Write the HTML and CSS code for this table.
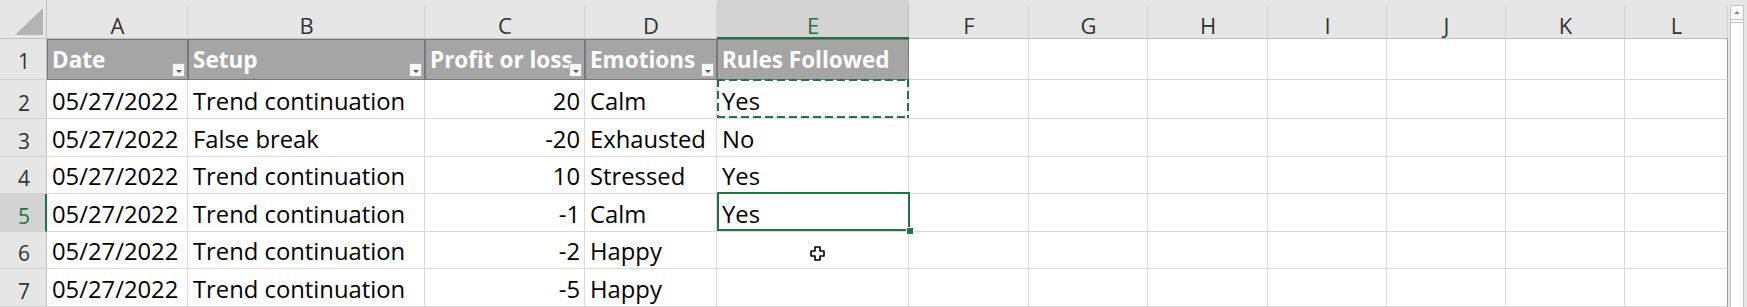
FILE: index.html
```html
<!DOCTYPE html>
<html>
<head>
<meta charset="utf-8">
<title>Trading journal</title>
<link rel="stylesheet" href="styles.css">
</head>
<body>
<div class="window">
  <div class="sheet">
    <div class="corner"><div class="tri"></div></div>
    <div class="ch">A</div>
    <div class="ch">B</div>
    <div class="ch">C</div>
    <div class="ch">D</div>
    <div class="ch sel">E</div>
    <div class="ch">F</div>
    <div class="ch">G</div>
    <div class="ch">H</div>
    <div class="ch">I</div>
    <div class="ch">J</div>
    <div class="ch">K</div>
    <div class="ch">L</div>

    <div class="rh r1">1</div>
    <div class="c th">Date<span class="dd"></span></div>
    <div class="c th">Setup<span class="dd"></span></div>
    <div class="c th">Profit or loss<span class="dd"></span></div>
    <div class="c th">Emotions<span class="dd"></span></div>
    <div class="c th">Rules Followed</div>
    <div class="c"></div><div class="c"></div><div class="c"></div><div class="c"></div><div class="c"></div><div class="c"></div><div class="c last"></div>

    <div class="rh">2</div>
    <div class="c">05/27/2022</div>
    <div class="c">Trend continuation</div>
    <div class="c num">20</div>
    <div class="c">Calm</div>
    <div class="c copy">Yes</div>
    <div class="c"></div><div class="c"></div><div class="c"></div><div class="c"></div><div class="c"></div><div class="c"></div><div class="c last"></div>

    <div class="rh">3</div>
    <div class="c">05/27/2022</div>
    <div class="c">False break</div>
    <div class="c num">-20</div>
    <div class="c">Exhausted</div>
    <div class="c">No</div>
    <div class="c"></div><div class="c"></div><div class="c"></div><div class="c"></div><div class="c"></div><div class="c"></div><div class="c last"></div>

    <div class="rh">4</div>
    <div class="c">05/27/2022</div>
    <div class="c">Trend continuation</div>
    <div class="c num">10</div>
    <div class="c">Stressed</div>
    <div class="c">Yes</div>
    <div class="c"></div><div class="c"></div><div class="c"></div><div class="c"></div><div class="c"></div><div class="c"></div><div class="c last"></div>

    <div class="rh sel">5</div>
    <div class="c">05/27/2022</div>
    <div class="c">Trend continuation</div>
    <div class="c num">-1</div>
    <div class="c">Calm</div>
    <div class="c active">Yes<span class="handle"></span></div>
    <div class="c"></div><div class="c"></div><div class="c"></div><div class="c"></div><div class="c"></div><div class="c"></div><div class="c last"></div>

    <div class="rh">6</div>
    <div class="c">05/27/2022</div>
    <div class="c">Trend continuation</div>
    <div class="c num">-2</div>
    <div class="c">Happy</div>
    <div class="c"><svg class="cursor" width="15" height="15" viewBox="0 0 15 15"><polygon points="5,1 10,1 10,5 14,5 14,10 10,10 10,14 5,14 5,10 1,10 1,5 5,5" fill="#fff" stroke="#000" stroke-width="1.6" stroke-linejoin="round"/></svg></div>
    <div class="c"></div><div class="c"></div><div class="c"></div><div class="c"></div><div class="c"></div><div class="c"></div><div class="c last"></div>

    <div class="rh">7</div>
    <div class="c">05/27/2022</div>
    <div class="c">Trend continuation</div>
    <div class="c num">-5</div>
    <div class="c">Happy</div>
    <div class="c"></div>
    <div class="c"></div><div class="c"></div><div class="c"></div><div class="c"></div><div class="c"></div><div class="c"></div><div class="c last"></div>
  </div>
  <div class="vscroll">
    <div class="track">
      <div class="up"></div>
      <div class="thumb"></div>
    </div>
  </div>
</div>
</body>
</html>
```

FILE: styles.css
```css
html, body {
  margin: 0;
  padding: 0;
  background: #ffffff;
  overflow: hidden;
}

.window {
  display: flex;
  width: 1747px;
  height: 307px;
  overflow: hidden;
}

.sheet {
  display: grid;
  grid-template-columns: 47px 141px 237px 160px 132px 192px 120px 119px 120px 119px 119px 119px 103px;
  grid-template-rows: 39px 41px 39px 38px 37px 38px 37px 38px;
  width: 1728px;
  flex: none;
  font-family: "Open Sans", "Noto Sans", sans-serif;
  color: #000;
}

.corner {
  box-sizing: border-box;
  background: #e6e6e6;
  border-right: 1px solid #bfbfbf;
  border-bottom: 1px solid #bfbfbf;
  display: flex;
  justify-content: flex-end;
  align-items: flex-end;
  padding: 0 3px 3px 0;
}

.tri {
  width: 28px;
  height: 27px;
  background: #b4b4b4;
  clip-path: polygon(100% 0, 100% 100%, 0 100%);
}

.ch {
  box-sizing: border-box;
  background: linear-gradient(#d2d2d2, #d2d2d2) right bottom / 1px calc(100% - 5px) no-repeat, #e6e6e6;
  border-bottom: 1px solid #bfbfbf;
  display: flex;
  justify-content: center;
  align-items: flex-end;
  padding-bottom: 1px;
  font-size: 22px;
  line-height: 24px;
  color: #333;
}

.ch.sel {
  background: linear-gradient(#bcbcbc, #bcbcbc) right bottom / 1px calc(100% - 5px) no-repeat, #d3d3d3;
  border-bottom: 2px solid #217346;
  padding-bottom: 0;
  color: #217346;
}

.rh {
  box-sizing: border-box;
  background: #e6e6e6;
  border-right: 1px solid #bfbfbf;
  border-bottom: 1px solid #d2d2d2;
  display: flex;
  justify-content: center;
  align-items: flex-end;
  padding-bottom: 3px;
  padding-left: 2px;
  font-size: 21px;
  line-height: 24px;
  color: #333;
}

.rh.r1 {
  padding-bottom: 6px;
}

.rh.sel {
  background: #d3d3d3;
  border-right: 2px solid #217346;
  color: #217346;
  padding-left: 3px;
}

.c {
  box-sizing: border-box;
  position: relative;
  border-right: 1px solid #dadada;
  border-bottom: 1px solid #dadada;
  display: flex;
  align-items: flex-end;
  padding: 0 4px 5px 5px;
  font-size: 23.8px;
  line-height: 24px;
  white-space: nowrap;
  overflow: hidden;
}

.c.num {
  justify-content: flex-end;
}

.c.last {
  border-right-color: #9c9c9c;
}

.c.th {
  background: #a5a5a5;
  color: #ffffff;
  font-weight: 700;
  font-size: 22.5px;
  padding-bottom: 7px;
  border-right: 1px solid #787878;
  border-bottom: 1px solid #787878;
  box-shadow: inset 0 1px 0 #787878, inset 1px 0 0 #787878;
}

.dd {
  position: absolute;
  right: 2px;
  bottom: 2px;
  width: 13px;
  height: 14px;
  box-sizing: border-box;
  background: #f7f7f7;
  border: 1px solid #b0b0b0;
}

.dd::after {
  content: "";
  position: absolute;
  left: 3px;
  bottom: 3px;
  border-left: 3px solid transparent;
  border-right: 3px solid transparent;
  border-top: 3px solid #555;
}

.c.copy {
  overflow: visible;
  z-index: 2;
}

.c.copy::before {
  content: "";
  position: absolute;
  left: 0;
  top: -1px;
  right: -1px;
  bottom: 0;
  background:
    repeating-linear-gradient(90deg, #217346 0 8px, transparent 8px 12px) left top / 100% 2px no-repeat,
    repeating-linear-gradient(90deg, #217346 0 8px, transparent 8px 12px) left bottom / 100% 2px no-repeat,
    repeating-linear-gradient(180deg, #217346 0 8px, transparent 8px 12px) left top / 2px 100% no-repeat,
    repeating-linear-gradient(180deg, #217346 0 8px, transparent 8px 12px) right top / 2px 100% no-repeat;
}

.c.active {
  overflow: visible;
  z-index: 3;
}

.c.active::before {
  content: "";
  position: absolute;
  left: 0;
  top: -2px;
  right: -2px;
  bottom: 0;
  border: 2px solid #217346;
}

.handle {
  position: absolute;
  right: -5px;
  bottom: -3px;
  width: 6px;
  height: 6px;
  background: #217346;
  outline: 1px solid #ffffff;
}

.cursor {
  position: absolute;
  left: 93px;
  top: 14px;
}

.vscroll {
  flex: none;
  width: 19px;
  height: 307px;
  box-sizing: border-box;
  background: #e6e6e6;
  padding: 5px 3px 0 2px;
}

.track {
  height: 100%;
  box-sizing: border-box;
  background: #ffffff;
  border: 1px solid #c4c4c4;
  border-bottom: none;
}

.up {
  position: relative;
  height: 13px;
  border-bottom: 1px solid #c4c4c4;
}

.up::after {
  content: "";
  position: absolute;
  left: 3px;
  top: 5px;
  border-left: 3px solid transparent;
  border-right: 3px solid transparent;
  border-bottom: 3px solid #8a8a8a;
}

.thumb {
  margin-top: 2px;
  border-top: 1px solid #c4c4c4;
}
```
